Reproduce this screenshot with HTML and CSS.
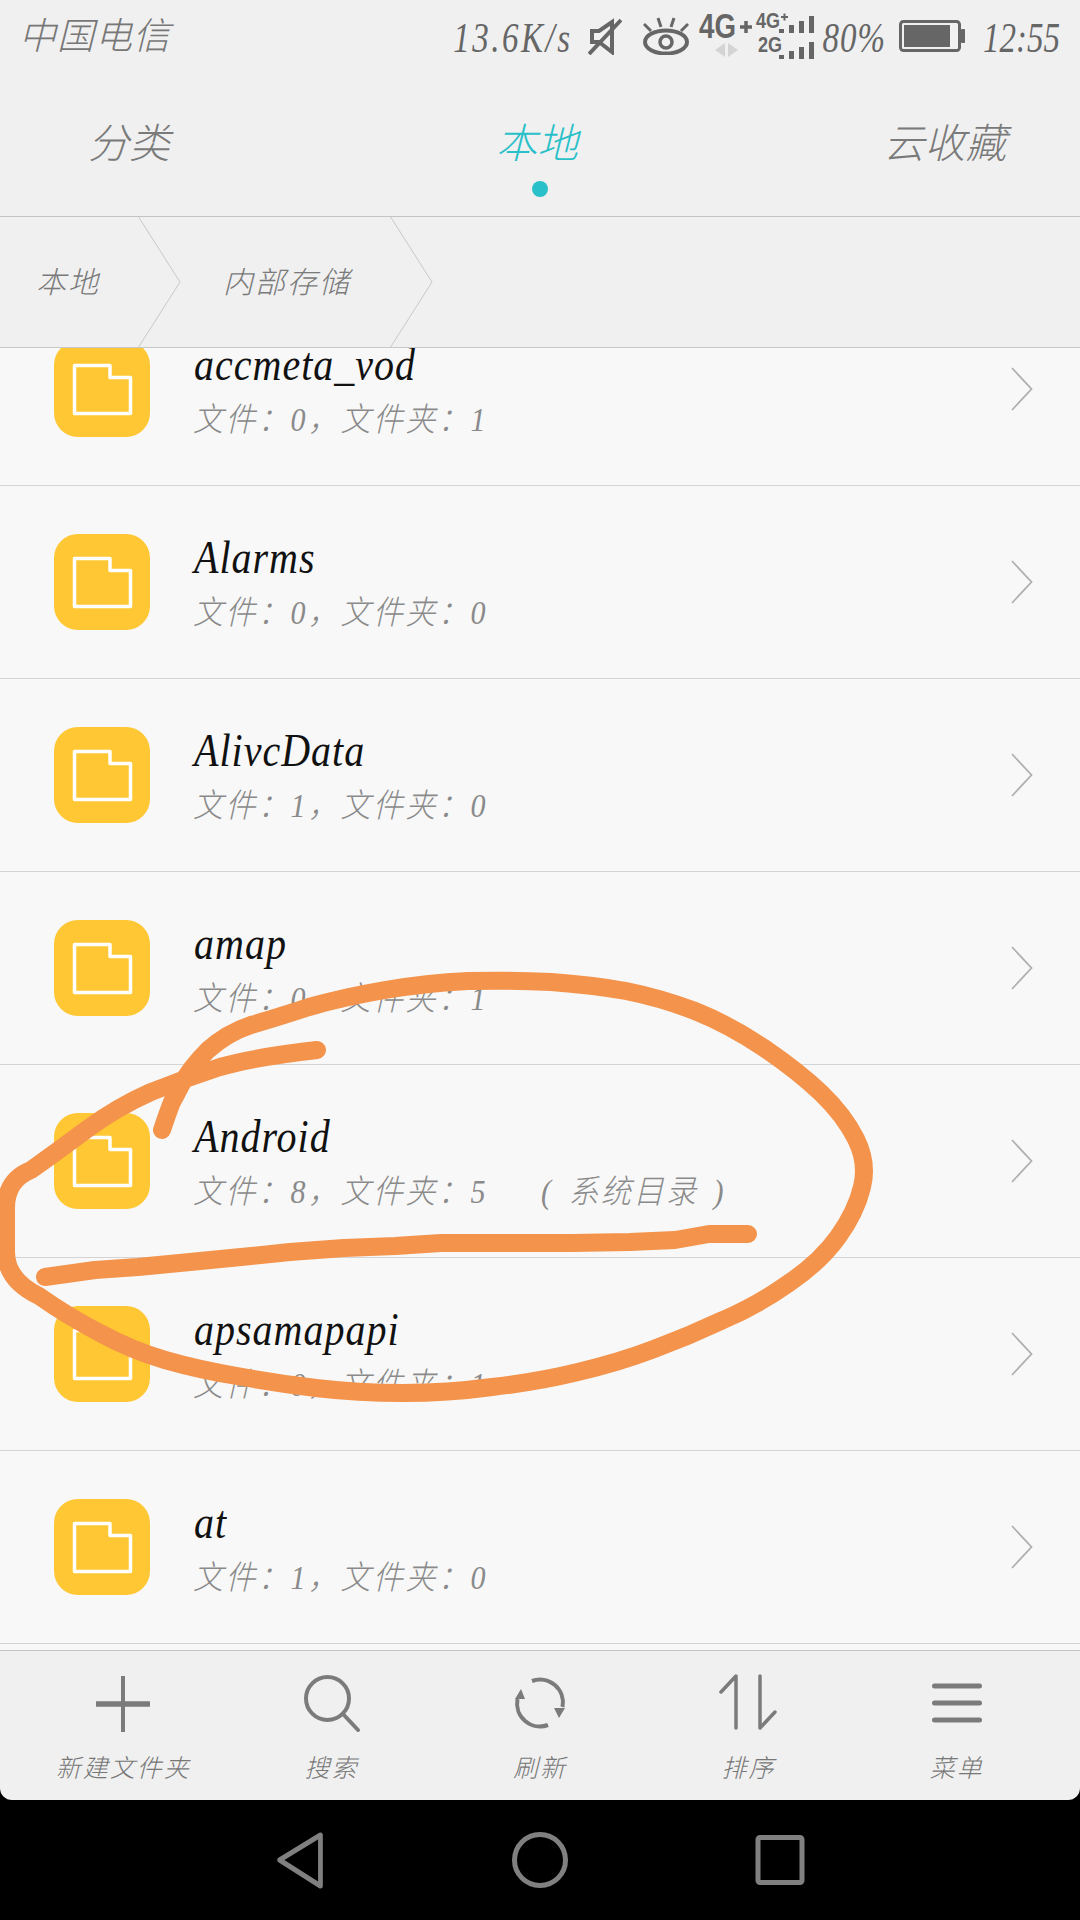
FILE: index.html
```html
<!DOCTYPE html>
<html lang="zh-CN">
<head>
    <meta charset="UTF-8">
    <meta name="viewport" content="width=device-width, initial-scale=1.0">
    <title>本地</title>
    <link rel="stylesheet" href="styles.css">
</head>
<body>
    <svg class="defs" width="0" height="0">
        <symbol id="folder" viewBox="0 0 96 96">
            <rect width="96" height="96" rx="24" fill="#ffc733"/>
            <path d="M20.5 24.5H56V36.5H76.5V72.5H20.5Z" fill="none" stroke="#fff" stroke-width="3.5" stroke-linejoin="round"/>
        </symbol>
        <symbol id="chevron" viewBox="0 0 24 44">
            <path d="M2 1L21.5 22L2 43" fill="none" stroke="#b0b0b0" stroke-width="1.8"/>
        </symbol>
        <symbol id="crumb-sep" viewBox="0 0 44 130">
            <path d="M0 -1L42 65L0 131" fill="none" stroke="#c8c8c8" stroke-width="1"/>
        </symbol>
    </svg>

    <div class="header">
        <div class="statusbar">
            <span class="carrier">中国电信</span>
            <div class="status-right">
                <span class="status-text speed">13.6K/s</span>
                <svg class="ic-mute" width="34" height="38" viewBox="0 0 34 38">
                    <path d="M4 14H11L24 5V35L11 25H4Z" fill="none" stroke="#666" stroke-width="4"/>
                    <path d="M33 3L1 37" stroke="#666" stroke-width="4"/>
                </svg>
                <svg class="ic-eye" width="46" height="38" viewBox="0 0 46 38">
                    <ellipse cx="23" cy="25" rx="21" ry="11.5" fill="none" stroke="#666" stroke-width="4"/>
                    <circle cx="23" cy="25" r="6" fill="none" stroke="#666" stroke-width="3.5"/>
                    <path d="M1 7L8 14M15 1L18 10M31 1L28 10M45 7L38 14" stroke="#666" stroke-width="3"/>
                </svg>
                <svg class="ic-net" width="116" height="72" viewBox="0 0 116 72">
                    <text class="net-big" x="1" y="38" textLength="37" lengthAdjust="spacingAndGlyphs">4G</text>
                    <path d="M42 27H54M48 21V33" stroke="#666" stroke-width="3.5"/>
                    <path d="M27 43V57L17 50ZM30 43V57L40 50Z" fill="#d4d4d4"/>
                    <text class="net-small" x="58" y="28" textLength="24" lengthAdjust="spacingAndGlyphs">4G</text>
                    <path d="M83 17H90M86.500 13.500V20.500" stroke="#666" stroke-width="2"/>
                    <text class="net-small" x="60" y="52" textLength="24" lengthAdjust="spacingAndGlyphs">2G</text>
                    <path d="M81 29h5v4h-5zM91 25h5v8h-5zM101 21h5v12h-5zM111 16h5v17h-5z" fill="#666"/>
                    <path d="M81 55h5v4h-5zM91 51h5v8h-5zM101 47h5v12h-5zM111 42h5v17h-5z" fill="#666"/>
                </svg>
                <span class="status-text percent">80%</span>
                <svg class="ic-battery" width="66" height="32" viewBox="0 0 66 32">
                    <rect x="1.500" y="1.500" width="59" height="29" rx="3" fill="none" stroke="#666" stroke-width="3"/>
                    <rect x="5" y="5" width="46" height="22" fill="#666"/>
                    <rect x="62" y="9" width="4" height="14" rx="1" fill="#666"/>
                </svg>
                <span class="status-text clock">12:55</span>
            </div>
        </div>
        <div class="tabs">
            <div class="tab">分类</div>
            <div class="tab active">本地<span class="tab-dot"></span></div>
            <div class="tab">云收藏</div>
        </div>
    </div>

    <div class="breadcrumb">
        <span class="crumb first">本地</span>
        <svg class="crumb-sep"><use href="#crumb-sep"/></svg>
        <span class="crumb second">内部存储</span>
        <svg class="crumb-sep"><use href="#crumb-sep"/></svg>
    </div>

    <div class="list">
        <div class="list-inner">
            <div class="row">
                <svg class="folder"><use href="#folder"/></svg>
                <div class="row-text">
                    <div class="row-title">accmeta_vod</div>
                    <div class="row-sub">文件：0，文件夹：1</div>
                </div>
                <svg class="chevron"><use href="#chevron"/></svg>
            </div>
            <div class="row">
                <svg class="folder"><use href="#folder"/></svg>
                <div class="row-text">
                    <div class="row-title">Alarms</div>
                    <div class="row-sub">文件：0，文件夹：0</div>
                </div>
                <svg class="chevron"><use href="#chevron"/></svg>
            </div>
            <div class="row">
                <svg class="folder"><use href="#folder"/></svg>
                <div class="row-text">
                    <div class="row-title">AlivcData</div>
                    <div class="row-sub">文件：1，文件夹：0</div>
                </div>
                <svg class="chevron"><use href="#chevron"/></svg>
            </div>
            <div class="row">
                <svg class="folder"><use href="#folder"/></svg>
                <div class="row-text">
                    <div class="row-title">amap</div>
                    <div class="row-sub">文件：0，文件夹：1</div>
                </div>
                <svg class="chevron"><use href="#chevron"/></svg>
            </div>
            <div class="row">
                <svg class="folder"><use href="#folder"/></svg>
                <div class="row-text">
                    <div class="row-title">Android</div>
                    <div class="row-sub">文件：8，文件夹：5<span class="row-tag">( 系统目录 )</span></div>
                </div>
                <svg class="chevron"><use href="#chevron"/></svg>
            </div>
            <div class="row">
                <svg class="folder"><use href="#folder"/></svg>
                <div class="row-text">
                    <div class="row-title">apsamapapi</div>
                    <div class="row-sub">文件：0，文件夹：1</div>
                </div>
                <svg class="chevron"><use href="#chevron"/></svg>
            </div>
            <div class="row">
                <svg class="folder"><use href="#folder"/></svg>
                <div class="row-text">
                    <div class="row-title">at</div>
                    <div class="row-sub">文件：1，文件夹：0</div>
                </div>
                <svg class="chevron"><use href="#chevron"/></svg>
            </div>
        </div>
    </div>

    <div class="toolbar">
        <div class="tool">
            <svg class="tool-icon" viewBox="0 0 60 60">
                <path d="M30 2V58" stroke="#7b7b7b" stroke-width="4"/>
                <path d="M3 30H57" stroke="#7b7b7b" stroke-width="5.500"/>
            </svg>
            <span>新建文件夹</span>
        </div>
        <div class="tool">
            <svg class="tool-icon" viewBox="0 0 60 60"><circle cx="25.500" cy="24.500" r="21.500" fill="none" stroke="#7b7b7b" stroke-width="4"/><path d="M41 40L56 56" stroke="#7b7b7b" stroke-width="4" stroke-linecap="round"/></svg>
            <span>搜索</span>
        </div>
        <div class="tool">
            <svg class="tool-icon" viewBox="-5 -4 60 60">
                <path d="M47.500 29A23 23 0 0 0 17 3M2.500 21A23 23 0 0 0 33 47" fill="none" stroke="#7b7b7b" stroke-width="4"/>
                <path d="M6 11L0 21H10ZM44 40L39 30H50Z" fill="#7b7b7b"/>
            </svg>
            <span>刷新</span>
        </div>
        <div class="tool">
            <svg class="tool-icon" viewBox="0 0 60 60"><path d="M3 18L18 2V54M42 2V54L57 38" fill="none" stroke="#7b7b7b" stroke-width="3.500" stroke-linecap="round" stroke-linejoin="round"/></svg>
            <span>排序</span>
        </div>
        <div class="tool">
            <svg class="tool-icon" viewBox="0 0 60 60"><path d="M7.500 12H52.500M7.500 29H52.500M7.500 46H52.500" stroke="#7b7b7b" stroke-width="5" stroke-linecap="round"/></svg>
            <span>菜单</span>
        </div>
    </div>

    <div class="navbar">
        <svg class="nav-icon" viewBox="0 0 60 60"><path d="M51 5V56L8 30Z" transform="translate(2 0) scale(.95 1)" fill="none" stroke="#808080" stroke-width="5" stroke-linejoin="round"/></svg>
        <svg class="nav-icon" viewBox="0 0 60 60"><circle cx="30" cy="30" r="25.500" fill="none" stroke="#808080" stroke-width="5"/></svg>
        <svg class="nav-icon" viewBox="0 0 60 60"><rect x="8" y="7.500" width="44" height="45" rx="2" fill="none" stroke="#808080" stroke-width="5"/></svg>
    </div>

    <!-- hand drawn marks over the list -->
    <svg class="scribble" viewBox="0 0 1080 1920">
        <path d="M162 1130Q168 1112 172 1102Q176 1095 181 1085Q190 1068 208 1050Q227 1033 251 1025Q275 1018 309 1007Q344 997 385 990Q427 983 468 981Q510 980 551 982Q592 985 626 991Q661 998 695 1011Q730 1025 764 1048Q799 1072 821 1093Q844 1115 856 1139Q868 1163 862 1187Q856 1212 838 1237Q820 1262 789 1283Q758 1305 723 1320Q689 1336 654 1349Q620 1362 578 1372Q537 1382 492 1387Q448 1393 403 1393Q358 1393 316 1388Q275 1383 237 1376Q200 1370 165 1360Q131 1350 100 1333Q69 1317 39 1296Q6 1280 6 1252L6 1208Q6 1180 31 1170Q55 1153 86 1130Q117 1107 151 1092Q186 1078 220 1067Q255 1057 317 1050"/>
        <path d="M45 1277L95 1270L138 1267L190 1262L241 1257L290 1252L344 1248L395 1246L441 1243L510 1243L572 1243L630 1242L675 1240L709 1234L748 1234"/>
    </svg>
</body>
</html>
```

FILE: styles.css
```css
html, body {
    margin: 0;
    padding: 0;
}

body {
    position: relative;
    width: 1080px;
    height: 1920px;
    overflow: hidden;
    display: flex;
    flex-direction: column;
    background-color: #000;
    font-family: "Liberation Serif", "Noto Sans CJK SC", serif;
    font-style: italic;
    font-weight: 300;
}

.defs {
    position: absolute;
}

.header {
    height: 216px;
    background-color: #f0f0f0;
    border-bottom: 1px solid #c4c4c4;
}

.statusbar {
    height: 72px;
    display: flex;
    justify-content: space-between;
    align-items: center;
    padding: 0 20px 0 19px;
    color: #777;
}

.carrier {
    font-size: 37px;
    letter-spacing: 1px;
    margin-top: -6px;
}

.status-right {
    display: flex;
    align-items: center;
}

.status-text {
    font-size: 33px;
    line-height: 72px;
    margin-top: 3px;
    color: #666;
    transform: scaleY(1.25);
}

.speed {
    letter-spacing: 2.500px;
}

.ic-mute {
    margin-left: 15px;
}

.ic-eye {
    margin-left: 21px;
}

.ic-net {
    margin-left: 9px;
}

.net-big, .net-small {
    font-family: "Liberation Sans", sans-serif;
    font-style: normal;
    font-weight: bold;
    fill: #666;
}

.net-big {
    font-size: 35px;
}

.net-small {
    font-size: 22px;
}

.percent {
    margin-left: 9px;
    letter-spacing: 1px;
}

.ic-battery {
    margin-left: 13px;
}

.clock {
    margin-left: 18px;
}

.tabs {
    height: 144px;
    display: flex;
    justify-content: space-between;
}

.tab {
    width: 264px;
    padding: 48px 6px 0 0;
    font-size: 41px;
    line-height: 48px;
    text-align: center;
    color: #7a7a7a;
    box-sizing: border-box;
}

.tab.active {
    color: #29c0c9;
}

.tab-dot {
    display: block;
    width: 16px;
    height: 16px;
    margin: 13px 0 0 124px;
    border-radius: 50%;
    background-color: #29c0c9;
}

.breadcrumb {
    height: 130px;
    display: flex;
    align-items: center;
    background-color: #f0f0f0;
    border-bottom: 1px solid #c8c8c8;
    font-size: 30px;
    color: #7a7a7a;
}

.crumb {
    letter-spacing: 2px;
    box-sizing: border-box;
    margin-top: -4px;
}

.crumb.first {
    width: 138px;
    padding-left: 36px;
}

.crumb.second {
    width: 208px;
    padding-left: 41px;
}

.crumb-sep {
    width: 44px;
    height: 130px;
}

.list {
    height: 1302px;
    overflow: hidden;
    background-color: #f8f8f8;
    border-bottom: 1px solid #c4c4c4;
}

.list-inner {
    margin-top: -55px;
}

.row {
    height: 192px;
    display: flex;
    align-items: center;
    padding: 0 46px 0 54px;
    border-bottom: 1px solid #d4d4d4;
}

.folder {
    width: 96px;
    height: 96px;
    flex-shrink: 0;
}

.row-text {
    flex: 1;
    margin-left: 45px;
    padding-top: 5px;
}

.row-title {
    margin-left: -1px;
    font-size: 40px;
    line-height: 50px;
    letter-spacing: 1px;
    color: #111;
    transform: scaleY(1.14);
    transform-origin: 0 36px;
}

.row-sub {
    margin: 9px 0 0 -2px;
    font-size: 30px;
    line-height: 40px;
    letter-spacing: 2.500px;
    color: #8a8a8a;
    transform: scaleY(1.1);
    transform-origin: 0 30px;
}

.row-tag {
    margin-left: 53px;
    word-spacing: 5px;
}

.chevron {
    width: 24px;
    height: 44px;
}

.toolbar {
    height: 149px;
    display: grid;
    grid-template-columns: repeat(5, 1fr);
    padding: 0 19px;
    background-color: #f0f0f0;
    border-radius: 0 0 12px 12px;
}

.tool {
    display: flex;
    flex-direction: column;
    align-items: center;
    padding-top: 23px;
    font-size: 25px;
    letter-spacing: 2px;
    color: #777;
}

.tool-icon {
    width: 60px;
    height: 60px;
    margin-bottom: 14px;
}

.navbar {
    height: 120px;
    display: grid;
    grid-template-columns: repeat(3, 240px);
    justify-content: center;
    align-items: center;
    justify-items: center;
    background-color: #000;
}

.nav-icon {
    width: 60px;
    height: 60px;
}

.scribble {
    position: absolute;
    top: 0;
    left: 0;
    width: 1080px;
    height: 1920px;
    pointer-events: none;
}

.scribble path {
    fill: none;
    stroke: #f4934b;
    stroke-width: 18;
    stroke-linecap: round;
    stroke-linejoin: round;
}
```
